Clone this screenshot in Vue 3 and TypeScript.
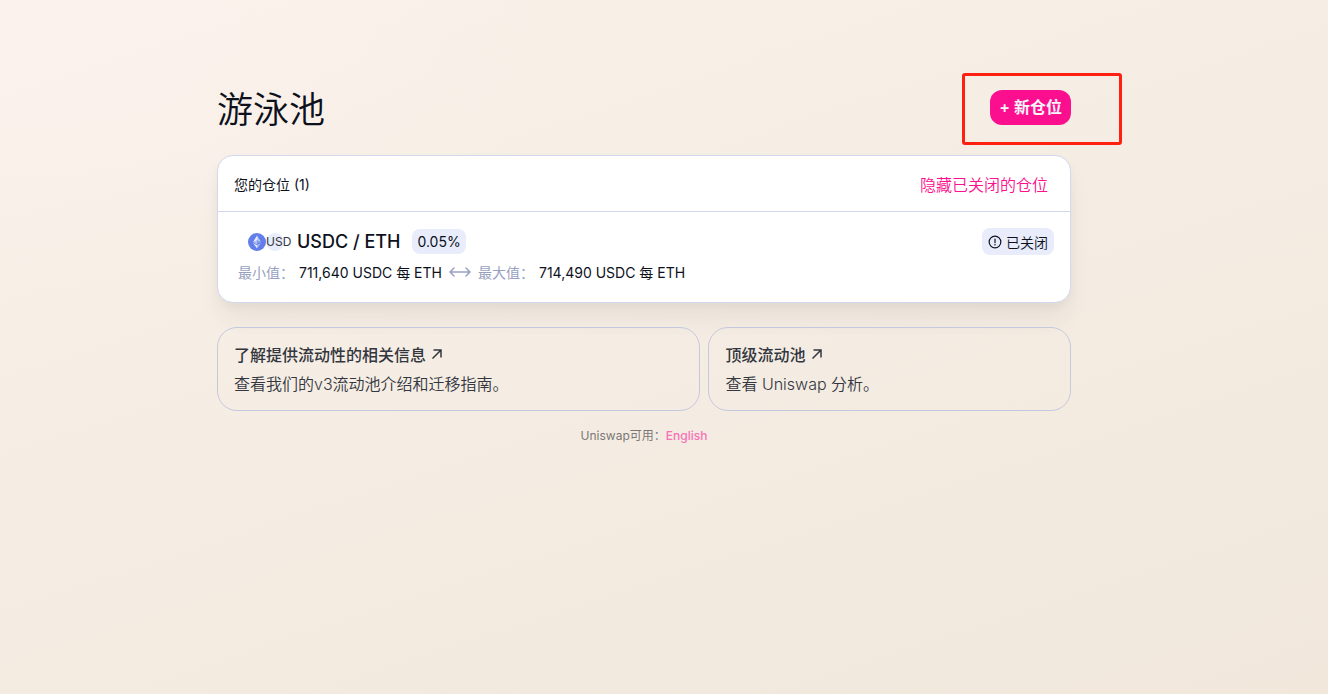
<script setup lang="ts">
import { ref } from 'vue'

interface Position {
  pair: string
  fee: string
  min: string
  max: string
  closed: boolean
}

interface InfoLink {
  title: string
  text: string
}

const positions: Position[] = [
  { pair: 'USDC / ETH', fee: '0.05%', min: '711,640 USDC 每 ETH', max: '714,490 USDC 每 ETH', closed: true },
]

const links: InfoLink[] = [
  { title: '了解提供流动性的相关信息', text: '查看我们的v3流动池介绍和迁移指南。' },
  { title: '顶级流动池', text: '查看 Uniswap 分析。' },
]

const hideClosed = ref(false)
</script>

<template>
  <main class="page">
    <div class="content">
      <header class="heading">
        <h1 class="title">游泳池</h1>
        <div class="action">
          <button type="button" class="new-position">+ 新仓位</button>
          <span class="highlight" aria-hidden="true"></span>
        </div>
      </header>

      <section class="card">
        <div class="card-head">
          <h2 class="card-title">您的仓位 ({{ positions.length }})</h2>
          <button type="button" class="toggle" @click="hideClosed = !hideClosed">隐藏已关闭的仓位</button>
        </div>
        <template v-for="p in positions" :key="p.pair">
          <a v-if="!(hideClosed && p.closed)" class="position" href="#">
            <span class="position-top">
              <span class="logos">
                <svg class="eth" viewBox="0 0 18 18" aria-hidden="true">
                  <circle cx="9" cy="9" r="9" fill="#627eea" />
                  <path d="M9 2.5v4.8l4 1.8z" fill="#fff" fill-opacity=".6" />
                  <path d="M9 2.5 5 9.1l4-1.8z" fill="#fff" fill-opacity=".85" />
                  <path d="M9 12.3v3.2l4-5.6z" fill="#fff" fill-opacity=".5" />
                  <path d="M9 15.5v-3.2L5 9.9z" fill="#fff" fill-opacity=".85" />
                  <path d="m9 11.5 4-2.4-4-1.8z" fill="#fff" fill-opacity=".2" />
                  <path d="m5 9.1 4 2.4V7.3z" fill="#fff" fill-opacity=".5" />
                </svg>
                <span class="usd">USD</span>
              </span>
              <span class="pair">{{ p.pair }}</span>
              <span class="badge fee">{{ p.fee }}</span>
              <span class="badge status">
                <svg class="alert" viewBox="0 0 24 24" aria-hidden="true">
                  <circle cx="12" cy="12" r="10" />
                  <path d="M12 7v6M12 16v1" />
                </svg>
                已关闭
              </span>
            </span>
            <span class="range">
              <span class="label">最小值：</span>
              <span class="value">{{ p.min }}</span>
              <svg class="both" viewBox="0 0 22 10" aria-hidden="true">
                <path d="M1 5h20M5 1 1 5l4 4M17 1l4 4-4 4" />
              </svg>
              <span class="label">最大值：</span>
              <span class="value">{{ p.max }}</span>
            </span>
          </a>
        </template>
      </section>

      <nav class="links">
        <a v-for="l in links" :key="l.title" class="link" href="#">
          <span class="link-title">
            {{ l.title }}
            <svg class="out" viewBox="0 0 10 10" aria-hidden="true">
              <path d="M.5 9.5 9 1M1.5 1H9v7.5" />
            </svg>
          </span>
          <span class="link-text">{{ l.text }}</span>
        </a>
      </nav>

      <p class="locale">Uniswap可用：<a class="locale-link" href="#">English</a></p>
    </div>
  </main>
</template>

<style>
body {
  margin: 0;
}
</style>

<style scoped>
.page {
  box-sizing: border-box;
  min-height: 100vh;
  padding: 90px 48px 24px 8px;
  background:
    radial-gradient(ellipse 600px 300px at 0 0, rgba(252, 241, 238, 0.9) 0%, rgba(252, 241, 238, 0) 100%),
    linear-gradient(162deg, #f9f2e9 0%, #f4ece2 55%, #f1e7db 100%);
  color: #0d111c;
  font-family: Inter, "Noto Sans CJK SC", sans-serif;
  font-size: 16px;
}
.content {
  max-width: 854px;
  margin: 0 auto;
}
.heading {
  display: flex;
  justify-content: space-between;
  align-items: flex-start;
  height: 65px;
}
.title {
  margin: 0;
  font-size: 36px;
  font-weight: 350;
  line-height: 40px;
}
.action {
  position: relative;
}
.new-position {
  display: block;
  height: 35px;
  padding: 0 9px;
  border: 0;
  border-radius: 12px;
  background: #fc0f8f;
  color: #f5f6fc;
  font: inherit;
  font-weight: 600;
  line-height: 35px;
  white-space: nowrap;
  cursor: pointer;
}
.highlight {
  position: absolute;
  inset: -17px -51px -20px -28px;
  border: 3px solid #ff2012;
  border-radius: 3px;
  pointer-events: none;
}
.card {
  border: 1px solid #d2d9ee;
  border-radius: 16px;
  background: #fff;
  box-shadow:
    0 0 1px rgba(0, 0, 0, 0.01),
    0 4px 8px rgba(0, 0, 0, 0.04),
    0 16px 24px rgba(0, 0, 0, 0.04),
    0 24px 32px rgba(0, 0, 0, 0.01);
}
.card-head {
  display: flex;
  justify-content: space-between;
  align-items: center;
  height: 55px;
  padding: 0 22px 0 16px;
  border-bottom: 1px solid #d2d9ee;
}
.card-title {
  margin: 0;
  font-size: 14px;
  font-weight: 400;
}
.toggle {
  padding: 0;
  border: 0;
  background: none;
  color: #fb118e;
  font: inherit;
  font-weight: 350;
  cursor: pointer;
}
.position {
  display: block;
  padding: 16px;
  color: inherit;
  text-decoration: none;
}
.position-top {
  display: flex;
  align-items: center;
  height: 27px;
}
.logos {
  display: flex;
  margin-left: 14px;
}
.eth {
  width: 18px;
  height: 18px;
}
.usd {
  width: 18px;
  height: 18px;
  border-radius: 50%;
  background: #e8ecfb;
  color: #333742;
  font-size: 12px;
  line-height: 18px;
}
.pair {
  margin-left: 13px;
  font-size: 18px;
  font-weight: 500;
}
.badge {
  display: flex;
  align-items: center;
  box-sizing: border-box;
  padding: 0 6px;
  border-radius: 8px;
  background: #e8ecfb;
  font-size: 14px;
}
.fee {
  height: 25px;
  margin-left: 12px;
  padding: 0 5px;
}
.status {
  gap: 4px;
  height: 27px;
  margin-left: auto;
  font-weight: 350;
}
.alert {
  width: 14px;
  height: 14px;
  fill: none;
  stroke: #0d111c;
  stroke-width: 2;
  stroke-linecap: round;
}
.range {
  display: flex;
  align-items: center;
  height: 28px;
  margin: 3px 0 0 4px;
  font-size: 14px;
}
.label {
  color: #98a1c0;
}
.value {
  margin-left: 5px;
}
.both {
  width: 22px;
  height: 10px;
  margin: 0 7px;
  fill: none;
  stroke: #98a1c0;
  stroke-width: 1.5;
  stroke-linecap: round;
  stroke-linejoin: round;
}
.links {
  display: grid;
  grid-template-columns: 4fr 3fr;
  gap: 8px;
  margin-top: 24px;
}
.link {
  display: flex;
  flex-direction: column;
  gap: 5px;
  padding: 15px 16px 13px;
  border: 1px solid #c4c9df;
  border-radius: 20px;
  color: #33363f;
  text-decoration: none;
}
.link-title {
  font-weight: 500;
  line-height: 24px;
}
.out {
  width: 10px;
  height: 10px;
  margin: 0 0 2px 2px;
  fill: none;
  stroke: #33363f;
  stroke-width: 1.5;
}
.link-text {
  font-weight: 350;
  line-height: 25px;
}
.locale {
  margin: 16px 0 0;
  color: #7a7877;
  font-size: 12px;
  line-height: 18px;
  text-align: center;
}
.locale-link {
  color: #f772b8;
  font-weight: 500;
  text-decoration: none;
}
</style>
